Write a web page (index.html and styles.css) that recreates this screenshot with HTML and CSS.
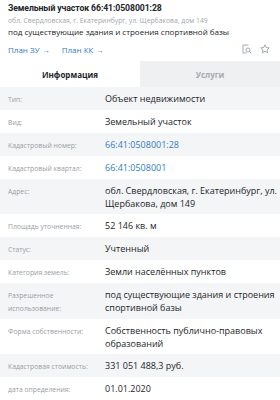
FILE: index.html
```html
<!DOCTYPE html>
<html lang="ru">
  <head>
    <meta charset="UTF-8" />
    <meta name="viewport" content="width=device-width, initial-scale=1.0" />
    <title>Земельный участок 66:41:0508001:28</title>
    <link rel="stylesheet" href="styles.css">
  </head>
  <body>
    <div class="card-header">
      <h1 class="card-title">Земельный участок 66:41:0508001:28</h1>
      <p class="card-address">обл. Свердловская, г. Екатеринбург, ул. Щербакова, дом 149</p>
      <p class="card-purpose">под существующие здания и строения спортивной базы</p>
      <div class="card-links">
        <a class="plan-link" href="#">План ЗУ →</a>
        <a class="plan-link" href="#">План КК →</a>
        <div class="card-actions">
          <svg width="10" height="10" viewBox="0 0 10 10" fill="none" stroke="#9aa0a6" stroke-width="0.9">
            <path d="M6.5 1H1v8h3.5" />
            <circle cx="6" cy="6" r="2" />
            <path d="M7.5 7.5L9.3 9.3" />
          </svg>
          <svg width="10" height="10" viewBox="0 0 10 10" fill="none" stroke="#9aa0a6" stroke-width="0.9" stroke-linejoin="round">
            <path d="M5 0.8L6.25 3.5L9.15 3.85L7 5.85L7.55 8.75L5 7.3L2.45 8.75L3 5.85L0.85 3.85L3.75 3.5Z" />
          </svg>
        </div>
      </div>
    </div>

    <div class="tabs">
      <div class="tab tab-active">Информация</div>
      <div class="tab">Услуги</div>
    </div>

    <div class="info-list">
      <div class="info-row">
        <span class="info-label">Тип:</span>
        <span class="info-value">Объект недвижимости</span>
      </div>
      <div class="info-row">
        <span class="info-label">Вид:</span>
        <span class="info-value">Земельный участок</span>
      </div>
      <div class="info-row">
        <span class="info-label">Кадастровый номер:</span>
        <span class="info-value info-link">66:41:0508001:28</span>
      </div>
      <div class="info-row">
        <span class="info-label">Кадастровый квартал:</span>
        <span class="info-value info-link">66:41:0508001</span>
      </div>
      <div class="info-row">
        <span class="info-label">Адрес:</span>
        <span class="info-value">обл. Свердловская, г. Екатеринбург, ул. Щербакова, дом 149</span>
      </div>
      <div class="info-row">
        <span class="info-label">Площадь уточненная:</span>
        <span class="info-value">52 146 кв. м</span>
      </div>
      <div class="info-row">
        <span class="info-label">Статус:</span>
        <span class="info-value">Учтенный</span>
      </div>
      <div class="info-row">
        <span class="info-label">Категория земель:</span>
        <span class="info-value">Земли населённых пунктов</span>
      </div>
      <div class="info-row">
        <span class="info-label">Разрешенное использование:</span>
        <span class="info-value">под существующие здания и строения спортивной базы</span>
      </div>
      <div class="info-row">
        <span class="info-label">Форма собственности:</span>
        <span class="info-value">Собственность публично-правовых образований</span>
      </div>
      <div class="info-row">
        <span class="info-label">Кадастровая стоимость:</span>
        <span class="info-value">331 051 488,3 руб.</span>
      </div>
      <div class="info-row">
        <span class="info-label">дата определения:</span>
        <span class="info-value">01.01.2020</span>
      </div>
    </div>
  </body>
</html>
```

FILE: styles.css
```css
:root {
  --text: #222529;
  --muted: #9a9ea3;
  --link: #2f7cc1;
  --row-alt: #f4f5f7;
  --tab-off: #eef0f2;
}

* {
  box-sizing: border-box;
  margin: 0;
  padding: 0;
}

body {
  font-family: "Open Sans", sans-serif;
  color: var(--text);
  background: white;
  width: 280px;
}

.card-header {
  padding: 2px 8px 0;
}

.card-title {
  font-family: Roboto, sans-serif;
  font-size: 8.7px;
  font-weight: 700;
  letter-spacing: -0.1px;
  line-height: 12px;
}

.card-address {
  font-size: 6.8px;
  color: #a3a7ab;
  line-height: 11px;
  margin-top: 1px;
}

.card-purpose {
  font-size: 8px;
  line-height: 12px;
}

.card-links {
  display: flex;
  align-items: center;
  gap: 12px;
  height: 16px;
  margin-top: 3px;
}

.plan-link {
  color: var(--link);
  font-size: 8px;
  text-decoration: none;
}

.card-actions {
  margin-left: auto;
  display: flex;
  gap: 8px;
  padding-right: 2px;
}

.tabs {
  display: flex;
  margin-top: 4px;
  height: 26px;
}

.tab {
  flex: 1;
  display: flex;
  align-items: center;
  justify-content: center;
  font-size: 8px;
  font-weight: 700;
  color: #a6aaae;
  background: var(--tab-off);
}

.tab-active {
  background: white;
  color: var(--text);
}

.info-row {
  display: flex;
  align-items: baseline;
  padding: 5px 0 4px 8px;
}

.info-row:nth-child(odd) {
  background: var(--row-alt);
}

.info-label {
  flex: 0 0 97px;
  font-size: 6.8px;
  color: var(--muted);
  line-height: 13px;
  padding-right: 8px;
}

.info-value {
  flex: 1;
  font-size: 9px;
  line-height: 13px;
}

.info-link {
  color: var(--link);
}
```
